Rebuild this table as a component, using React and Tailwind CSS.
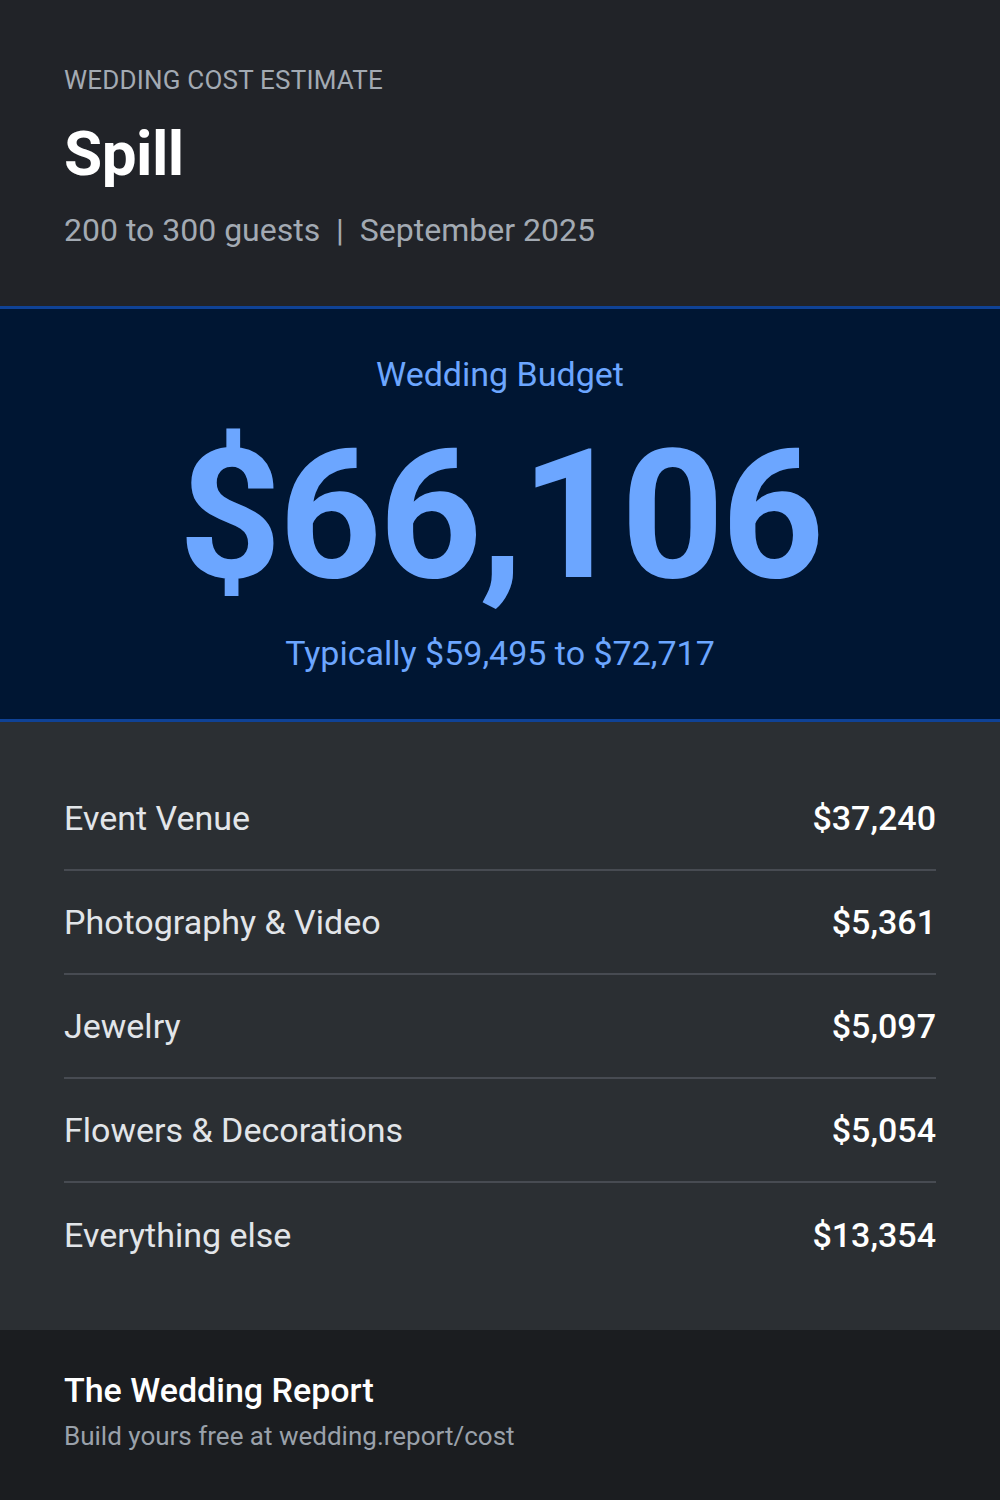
export default function App() {
  const rows = [
    ["Event Venue", "$37,240"],
    ["Photography & Video", "$5,361"],
    ["Jewelry", "$5,097"],
    ["Flowers & Decorations", "$5,054"],
    ["Everything else", "$13,354"],
  ];
  return (
    <div className="w-[1000px] h-[1500px] flex flex-col font-['Roboto',sans-serif]">
      <div className="bg-[#212328] h-[306px] px-16 pt-[62px]">
        <div className="text-[26px] leading-[36px] text-[#a3aab3] tracking-[0.2px]">WEDDING COST ESTIMATE</div>
        <div className="text-[62px] leading-[72px] font-bold text-white mt-[20px] tracking-[-0.5px]">Spill</div>
        <div className="text-[32px] leading-[40px] text-[#a3aab3] mt-[20px]">200 to 300 guests &nbsp;|&nbsp; September 2025</div>
      </div>
      <div className="bg-[#001633] h-[416px] border-y-[3px] border-[#0f4296] flex flex-col items-center">
        <div className="text-[34px] leading-[40px] text-[#6ca6ff] mt-[45px]">Wedding Budget</div>
        <div className="text-[180px] leading-[200px] font-bold text-[#6ca6ff] mt-[22px] tracking-[-3px]">$66,106</div>
        <div className="text-[34px] leading-[40px] text-[#6ca6ff] mt-[17px]">Typically $59,495 to $72,717</div>
      </div>
      <div className="bg-[#2b2f33] flex-1 px-16 pt-[45px] flex flex-col">
        {rows.map(([k, v], i) => (
          <div key={k} className={`h-[104px] flex items-center justify-between ${i < rows.length - 1 ? "border-b-2 border-[#474b52]" : ""}`}>
            <span className="text-[34px] text-[#e2e5e9]">{k}</span>
            <span className="text-[34px] font-medium text-white">{v}</span>
          </div>
        ))}
      </div>
      <div className="bg-[#1b1d20] h-[170px] px-16 pt-[40px]">
        <div className="text-[34px] leading-[40px] font-medium text-white">The Wedding Report</div>
        <div className="text-[26px] leading-[32px] text-[#9aa1aa] mt-[10px]">Build yours free at wedding.report/cost</div>
      </div>
    </div>
  );
}
